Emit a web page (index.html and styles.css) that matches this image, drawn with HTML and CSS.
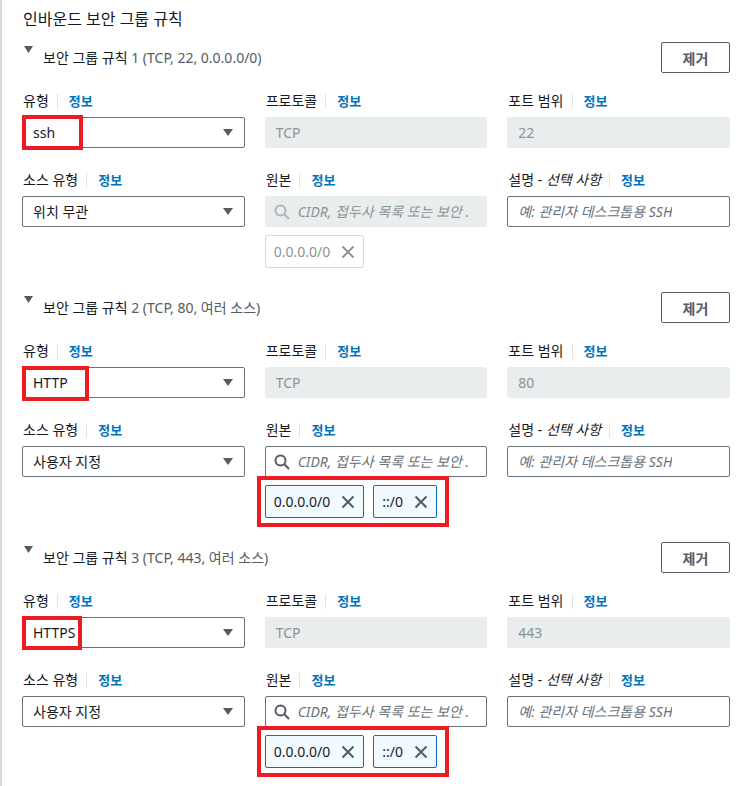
FILE: index.html
```html
<!DOCTYPE HTML>
<html lang="ko">

<head>
  <meta name="viewport" content="width=device-width, initial-scale=1" charset="utf-8">
  <title>인바운드 보안 그룹 규칙</title>
  <link rel="stylesheet" href="styles.css">
</head>

<body>
  <div class="panel">
    <h2 class="panel-title">인바운드 보안 그룹 규칙</h2>

    <!-- rule 1 -->
    <section class="rule">
      <div class="rule-header">
        <div class="rule-toggle">
          <svg class="toggle-caret" viewBox="0 0 9 8"><polygon points="0,0 9,0 4.5,7"></polygon></svg>
          <span class="rule-name">보안 그룹 규칙 <span class="rule-summary">1 (TCP, 22, 0.0.0.0/0)</span></span>
        </div>
        <button type="button" class="button-remove">제거</button>
      </div>

      <div class="rule-grid">
        <div class="field">
          <div class="field-label">유형<span class="sep"></span><a class="info" href="#">정보</a></div>
          <div class="select-box">
            <span>ssh</span>
            <svg class="select-caret" viewBox="0 0 10 8"><polygon points="0,0 10,0 5,7"></polygon></svg>
            <span class="mark mark-ssh"></span>
          </div>
        </div>
        <div class="field">
          <div class="field-label">프로토콜<span class="sep"></span><a class="info" href="#">정보</a></div>
          <div class="input-box disabled">TCP</div>
        </div>
        <div class="field">
          <div class="field-label">포트 범위<span class="sep"></span><a class="info" href="#">정보</a></div>
          <div class="input-box disabled">22</div>
        </div>

        <div class="field">
          <div class="field-label">소스 유형<span class="sep"></span><a class="info" href="#">정보</a></div>
          <div class="select-box">
            <span>위치 무관</span>
            <svg class="select-caret" viewBox="0 0 10 8"><polygon points="0,0 10,0 5,7"></polygon></svg>
          </div>
        </div>
        <div class="field">
          <div class="field-label">원본<span class="sep"></span><a class="info" href="#">정보</a></div>
          <div class="input-box search disabled">
            <svg class="icon-search" viewBox="0 0 16 16"><circle cx="6.5" cy="6.5" r="5"></circle><line x1="10.3" y1="10.3" x2="15" y2="15"></line></svg>
            <span class="placeholder">CIDR, 접두사 목록 또는 보안 .</span>
          </div>
          <div class="token-list">
            <span class="token token-disabled">0.0.0.0/0
              <svg class="icon-x" viewBox="0 0 14 14"><path d="M1.5 1.5 L12.5 12.5 M12.5 1.5 L1.5 12.5"></path></svg>
            </span>
          </div>
        </div>
        <div class="field">
          <div class="field-label">설명 - <i>선택 사항</i><span class="sep"></span><a class="info" href="#">정보</a></div>
          <div class="input-box"><span class="placeholder">예: 관리자 데스크톱용 SSH</span></div>
        </div>
      </div>
    </section>

    <!-- rule 2 -->
    <section class="rule">
      <div class="rule-header">
        <div class="rule-toggle">
          <svg class="toggle-caret" viewBox="0 0 9 8"><polygon points="0,0 9,0 4.5,7"></polygon></svg>
          <span class="rule-name">보안 그룹 규칙 <span class="rule-summary">2 (TCP, 80, 여러 소스)</span></span>
        </div>
        <button type="button" class="button-remove">제거</button>
      </div>

      <div class="rule-grid">
        <div class="field">
          <div class="field-label">유형<span class="sep"></span><a class="info" href="#">정보</a></div>
          <div class="select-box">
            <span>HTTP</span>
            <svg class="select-caret" viewBox="0 0 10 8"><polygon points="0,0 10,0 5,7"></polygon></svg>
            <span class="mark mark-http"></span>
          </div>
        </div>
        <div class="field">
          <div class="field-label">프로토콜<span class="sep"></span><a class="info" href="#">정보</a></div>
          <div class="input-box disabled">TCP</div>
        </div>
        <div class="field">
          <div class="field-label">포트 범위<span class="sep"></span><a class="info" href="#">정보</a></div>
          <div class="input-box disabled">80</div>
        </div>

        <div class="field">
          <div class="field-label">소스 유형<span class="sep"></span><a class="info" href="#">정보</a></div>
          <div class="select-box">
            <span>사용자 지정</span>
            <svg class="select-caret" viewBox="0 0 10 8"><polygon points="0,0 10,0 5,7"></polygon></svg>
          </div>
        </div>
        <div class="field">
          <div class="field-label">원본<span class="sep"></span><a class="info" href="#">정보</a></div>
          <div class="input-box search">
            <svg class="icon-search" viewBox="0 0 16 16"><circle cx="6.5" cy="6.5" r="5"></circle><line x1="10.3" y1="10.3" x2="15" y2="15"></line></svg>
            <span class="placeholder">CIDR, 접두사 목록 또는 보안 .</span>
          </div>
          <div class="token-list">
            <span class="token">0.0.0.0/0
              <svg class="icon-x" viewBox="0 0 14 14"><path d="M1.5 1.5 L12.5 12.5 M12.5 1.5 L1.5 12.5"></path></svg>
            </span>
            <span class="token">::/0
              <svg class="icon-x" viewBox="0 0 14 14"><path d="M1.5 1.5 L12.5 12.5 M12.5 1.5 L1.5 12.5"></path></svg>
            </span>
            <span class="mark mark-tokens"></span>
          </div>
        </div>
        <div class="field">
          <div class="field-label">설명 - <i>선택 사항</i><span class="sep"></span><a class="info" href="#">정보</a></div>
          <div class="input-box"><span class="placeholder">예: 관리자 데스크톱용 SSH</span></div>
        </div>
      </div>
    </section>

    <!-- rule 3 -->
    <section class="rule">
      <div class="rule-header">
        <div class="rule-toggle">
          <svg class="toggle-caret" viewBox="0 0 9 8"><polygon points="0,0 9,0 4.5,7"></polygon></svg>
          <span class="rule-name">보안 그룹 규칙 <span class="rule-summary">3 (TCP, 443, 여러 소스)</span></span>
        </div>
        <button type="button" class="button-remove">제거</button>
      </div>

      <div class="rule-grid">
        <div class="field">
          <div class="field-label">유형<span class="sep"></span><a class="info" href="#">정보</a></div>
          <div class="select-box">
            <span>HTTPS</span>
            <svg class="select-caret" viewBox="0 0 10 8"><polygon points="0,0 10,0 5,7"></polygon></svg>
            <span class="mark mark-https"></span>
          </div>
        </div>
        <div class="field">
          <div class="field-label">프로토콜<span class="sep"></span><a class="info" href="#">정보</a></div>
          <div class="input-box disabled">TCP</div>
        </div>
        <div class="field">
          <div class="field-label">포트 범위<span class="sep"></span><a class="info" href="#">정보</a></div>
          <div class="input-box disabled">443</div>
        </div>

        <div class="field">
          <div class="field-label">소스 유형<span class="sep"></span><a class="info" href="#">정보</a></div>
          <div class="select-box">
            <span>사용자 지정</span>
            <svg class="select-caret" viewBox="0 0 10 8"><polygon points="0,0 10,0 5,7"></polygon></svg>
          </div>
        </div>
        <div class="field">
          <div class="field-label">원본<span class="sep"></span><a class="info" href="#">정보</a></div>
          <div class="input-box search">
            <svg class="icon-search" viewBox="0 0 16 16"><circle cx="6.5" cy="6.5" r="5"></circle><line x1="10.3" y1="10.3" x2="15" y2="15"></line></svg>
            <span class="placeholder">CIDR, 접두사 목록 또는 보안 .</span>
          </div>
          <div class="token-list">
            <span class="token">0.0.0.0/0
              <svg class="icon-x" viewBox="0 0 14 14"><path d="M1.5 1.5 L12.5 12.5 M12.5 1.5 L1.5 12.5"></path></svg>
            </span>
            <span class="token">::/0
              <svg class="icon-x" viewBox="0 0 14 14"><path d="M1.5 1.5 L12.5 12.5 M12.5 1.5 L1.5 12.5"></path></svg>
            </span>
            <span class="mark mark-tokens"></span>
          </div>
        </div>
        <div class="field">
          <div class="field-label">설명 - <i>선택 사항</i><span class="sep"></span><a class="info" href="#">정보</a></div>
          <div class="input-box"><span class="placeholder">예: 관리자 데스크톱용 SSH</span></div>
        </div>
      </div>
    </section>
  </div>
</body>

</html>
```

FILE: styles.css
```css
body {
  background-color: #fff;
  margin: 0;
  padding: 0;
  font-family: "Noto Sans", "Noto Sans CJK KR", sans-serif;
  font-size: 14px;
  line-height: 20px;
  color: #16191f;
}

.panel {
  min-height: 100vh;
  box-sizing: border-box;
  border-left: 2px solid #d5dbdb;
  padding: 7px 19px 0 20px;
}

.panel-title {
  margin: 0 0 0 1px;
  font-size: 16px;
  font-weight: normal;
  line-height: 24px;
}

/* one rule block */
.rule {
  margin-top: 11px;
}

.rule + .rule {
  margin-top: 24px;
}

.rule-header {
  display: flex;
  flex-direction: row;
  justify-content: space-between;
  align-items: center;
  height: 31px;
}

.rule-toggle {
  display: flex;
  align-items: flex-start;
}

.toggle-caret {
  width: 9px;
  height: 8px;
  margin: -1px 10px 0 2px;
  fill: #545b64;
}

.rule-name {
  line-height: 22px;
}

.rule-summary {
  color: #545b64;
  font-size: 14px;
}

.button-remove {
  width: 69px;
  height: 31px;
  padding: 0;
  background-color: #fff;
  border: 1px solid #545b64;
  border-radius: 2px;
  color: #545b64;
  font-family: inherit;
  font-size: 14px;
  font-weight: bold;
  cursor: pointer;
}

.rule-grid {
  display: grid;
  grid-template-columns: repeat(3, 1fr);
  column-gap: 20px;
  row-gap: 22px;
  margin-top: 18px;
}

.field-label {
  display: flex;
  align-items: center;
  height: 20px;
  margin: 0 0 6px 1px;
  white-space: pre;
}

.field-label i {
  font-style: italic;
}

.sep {
  width: 1px;
  height: 15px;
  margin: 0 11px 0 8px;
  background-color: #e1e4e4;
}

.info {
  color: #0073bb;
  font-size: 13px;
  font-weight: bold;
  text-decoration: none;
}

/* controls */
.select-box,
.input-box {
  position: relative;
  display: flex;
  align-items: center;
  height: 31px;
  box-sizing: border-box;
  padding: 0 10px;
  border: 1px solid #687078;
  border-radius: 2px;
  background-color: #fff;
  white-space: nowrap;
  overflow: visible;
}

.select-box {
  justify-content: space-between;
  padding-right: 11px;
}

.select-caret {
  width: 10px;
  height: 8px;
  fill: #545b64;
}

.input-box.disabled {
  border-color: #eaeded;
  background-color: #eaeded;
  color: #879596;
}

.input-box.search {
  padding-left: 8px;
  overflow: hidden;
}

.icon-search {
  flex: none;
  width: 16px;
  height: 16px;
  margin-right: 8px;
  fill: none;
  stroke: #545b64;
  stroke-width: 2;
}

.disabled .icon-search {
  stroke: #aab7b8;
}

.placeholder {
  color: #687078;
  font-style: italic;
  overflow: hidden;
}

.disabled .placeholder {
  color: #879596;
}

/* tokens */
.token-list {
  position: relative;
  display: flex;
  flex-direction: row;
  gap: 9px;
  margin-top: 8px;
}

.token {
  display: flex;
  align-items: center;
  height: 33px;
  box-sizing: border-box;
  padding: 0 8px 0 8px;
  background-color: #f1faff;
  border: 1px solid #0073bb;
  border-radius: 2px;
  color: #16191f;
  white-space: nowrap;
}

.token-disabled {
  background-color: #fff;
  border-color: #d5dbdb;
  color: #879596;
}

.icon-x {
  width: 14px;
  height: 14px;
  margin-left: 11px;
  fill: none;
  stroke: #545b64;
  stroke-width: 2;
}

.token-disabled .icon-x {
  stroke: #879596;
}

/* red highlight marks drawn over the screenshot */
.mark {
  position: absolute;
  box-sizing: border-box;
  border: 4px solid #ec1c24;
  pointer-events: none;
}

.mark-ssh {
  left: -1px;
  top: -3px;
  width: 61px;
  height: 35px;
}

.mark-http {
  left: -1px;
  top: -2px;
  width: 67px;
  height: 35px;
}

.mark-https {
  left: -1px;
  top: -2px;
  width: 60px;
  height: 34px;
}

.mark-tokens {
  left: -8px;
  top: -9px;
  width: 192px;
  height: 51px;
}
```
